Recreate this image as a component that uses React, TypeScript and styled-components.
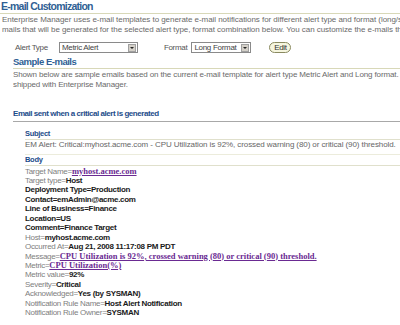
import React from "react";
import styled, { createGlobalStyle } from "styled-components";

const GlobalStyle = createGlobalStyle`
  html, body {
    margin: 0;
    padding: 0;
    background: #ffffff;
  }
  body {
    font-family: "Liberation Sans", Arial, sans-serif;
    width: 400px;
    height: 325px;
    overflow: hidden;
  }
`;

const Page = styled.div`
  width: 400px;
  height: 325px;
  overflow: hidden;
  color: #666;
`;

const Title = styled.h1`
  margin: 0;
  padding: 0 0 0 1px;
  height: 13px;
  line-height: 13px;
  font-size: 10.5px;
  letter-spacing: -0.75px;
  font-weight: bold;
  color: #2f5f94;
  border-bottom: 1px solid #d8d8b8;
`;

const TextBlock = styled.div<{ $indent?: number; $top?: number }>`
  padding-left: ${(p) => p.$indent ?? 0}px;
  margin-top: ${(p) => p.$top ?? 0}px;
`;

const Line = styled.div<{ $spacing?: number }>`
  white-space: nowrap;
  overflow: hidden;
  font-size: 8px;
  line-height: 9.5px;
  letter-spacing: ${(p) => p.$spacing ?? 0}px;
  color: #6a6a6a;
`;

const Controls = styled.div`
  display: flex;
  align-items: center;
  height: 11px;
  margin-top: 8px;
  padding-left: 15px;
  font-size: 8px;
  letter-spacing: -0.3px;
  color: #555;
`;

const Label = styled.span<{ $gap: number }>`
  margin-right: ${(p) => p.$gap}px;
`;

const Select = styled.div<{ $width: number; $after: number }>`
  display: flex;
  align-items: center;
  justify-content: space-between;
  box-sizing: border-box;
  width: ${(p) => p.$width}px;
  height: 11px;
  margin-right: ${(p) => p.$after}px;
  border: 1px solid #8a8a8a;
  background: #fff;
  padding-left: 2px;
  color: #444;
  font-size: 8px;
`;

const Arrow = styled.span`
  width: 8px;
  height: 8px;
  margin-right: 1px;
  background: #d4d0c8;
  border: 1px solid #a0a0a0;
  box-sizing: border-box;
  display: flex;
  align-items: center;
  justify-content: center;
  &::after {
    content: "";
    border-left: 2px solid transparent;
    border-right: 2px solid transparent;
    border-top: 2px solid #222;
  }
`;

const EditButton = styled.span`
  display: inline-flex;
  align-items: center;
  justify-content: center;
  box-sizing: border-box;
  width: 22px;
  height: 11px;
  border: 1px solid #8a8a60;
  border-radius: 6px;
  background: #f6f6df;
  color: #333;
  font-size: 8px;
`;

const SubTitle = styled.h2`
  margin: 3px 0 0 13px;
  height: 12px;
  line-height: 12px;
  font-size: 9.5px;
  letter-spacing: -0.5px;
  font-weight: bold;
  color: #2f5f94;
  border-bottom: 1px solid #d8d8b8;
`;

const AlertHeader = styled.h3`
  margin: 19px 0 0 13px;
  height: 13px;
  line-height: 12px;
  font-size: 8px;
  letter-spacing: -0.45px;
  font-weight: bold;
  color: #1d4c8a;
  border-bottom: 1px solid #a8a8a8;
`;

const FieldHead = styled.div<{ $top: number; $height: number }>`
  margin: ${(p) => p.$top}px 0 0 25px;
  height: ${(p) => p.$height}px;
  line-height: 10px;
  font-size: 7.5px;
  letter-spacing: -0.3px;
  font-weight: bold;
  color: #1d4c8a;
  border-bottom: 1px solid #e0e0cc;
`;

const FieldText = styled.div`
  margin-left: 25px;
  height: 14px;
  line-height: 10px;
  white-space: nowrap;
  overflow: hidden;
  font-size: 8px;
  letter-spacing: -0.09px;
  color: #666;
  border-bottom: 1px solid #ececdc;
`;

const Body = styled.div`
  margin-left: 25px;
  padding-top: 0.5px;
`;

const Row = styled.div`
  white-space: nowrap;
  font-size: 8px;
  line-height: 9.45px;
  letter-spacing: -0.3px;
  color: #808080;
`;

const Val = styled.b`
  color: #1a1a1a;
`;

const LinkVal = styled.a`
  font-family: "Liberation Serif", "Times New Roman", serif;
  font-weight: bold;
  font-size: 8.5px;
  letter-spacing: 0;
  color: #6a2a92;
  text-decoration: underline;
`;

type Part = { k: string; v?: string; link?: boolean; bold?: boolean };

const rows: Part[] = [
  { k: "Target Name=", v: "myhost.acme.com", link: true },
  { k: "Target type=", v: "Host" },
  { k: "Deployment Type=Production", bold: true },
  { k: "Contact=emAdmin@acme.com", bold: true },
  { k: "Line of Business=Finance", bold: true },
  { k: "Location=US", bold: true },
  { k: "Comment=Finance Target", bold: true },
  { k: "Host=", v: "myhost.acme.com" },
  { k: "Occurred At=", v: "Aug 21, 2008 11:17:08 PM PDT" },
  {
    k: "Message=",
    v: "CPU Utilization is 92%, crossed warning (80) or critical (90) threshold.",
    link: true,
  },
  { k: "Metric=", v: "CPU Utilization(%)", link: true },
  { k: "Metric value=", v: "92%" },
  { k: "Severity=", v: "Critical" },
  { k: "Acknowledged=", v: "Yes (by SYSMAN)" },
  { k: "Notification Rule Name=", v: "Host Alert Notification" },
  { k: "Notification Rule Owner=", v: "SYSMAN" },
];

export default function App() {
  return (
    <Page>
      <GlobalStyle />
      <Title>E-mail Customization</Title>
      <TextBlock $indent={2} $top={1}>
        <Line $spacing={-0.05}>
          Enterprise Manager uses e-mail templates to generate e-mail notifications for different alert type and format (long/sh
        </Line>
        <Line $spacing={-0.05}>
          mails that will be generated for the selected alert type, format combination below. You can customize the e-mails tha
        </Line>
      </TextBlock>
      <Controls>
        <Label $gap={11}>Alert Type</Label>
        <Select $width={79} $after={26}>
          Metric Alert
          <Arrow />
        </Select>
        <Label $gap={4}>Format</Label>
        <Select $width={60} $after={18}>
          Long Format
          <Arrow />
        </Select>
        <EditButton>Edit</EditButton>
      </Controls>
      <SubTitle>Sample E-mails</SubTitle>
      <TextBlock $indent={13} $top={1}>
        <Line $spacing={-0.12}>
          Shown below are sample emails based on the current e-mail template for alert type Metric Alert and Long format.
        </Line>
        <Line $spacing={-0.12}>shipped with Enterprise Manager.</Line>
      </TextBlock>
      <AlertHeader>Email sent when a critical alert is generated</AlertHeader>
      <FieldHead $top={7} $height={10}>Subject</FieldHead>
      <FieldText>
        EM Alert: Critical:myhost.acme.com - CPU Utilization is 92%, crossed warning (80) or critical (90) threshold.
      </FieldText>
      <FieldHead $top={0} $height={10}>Body</FieldHead>
      <Body>
        {rows.map((r) => (
          <Row key={r.k}>
            {r.bold ? <Val>{r.k}</Val> : r.k}
            {r.v && (r.link ? <LinkVal>{r.v}</LinkVal> : <Val>{r.v}</Val>)}
          </Row>
        ))}
      </Body>
    </Page>
  );
}
